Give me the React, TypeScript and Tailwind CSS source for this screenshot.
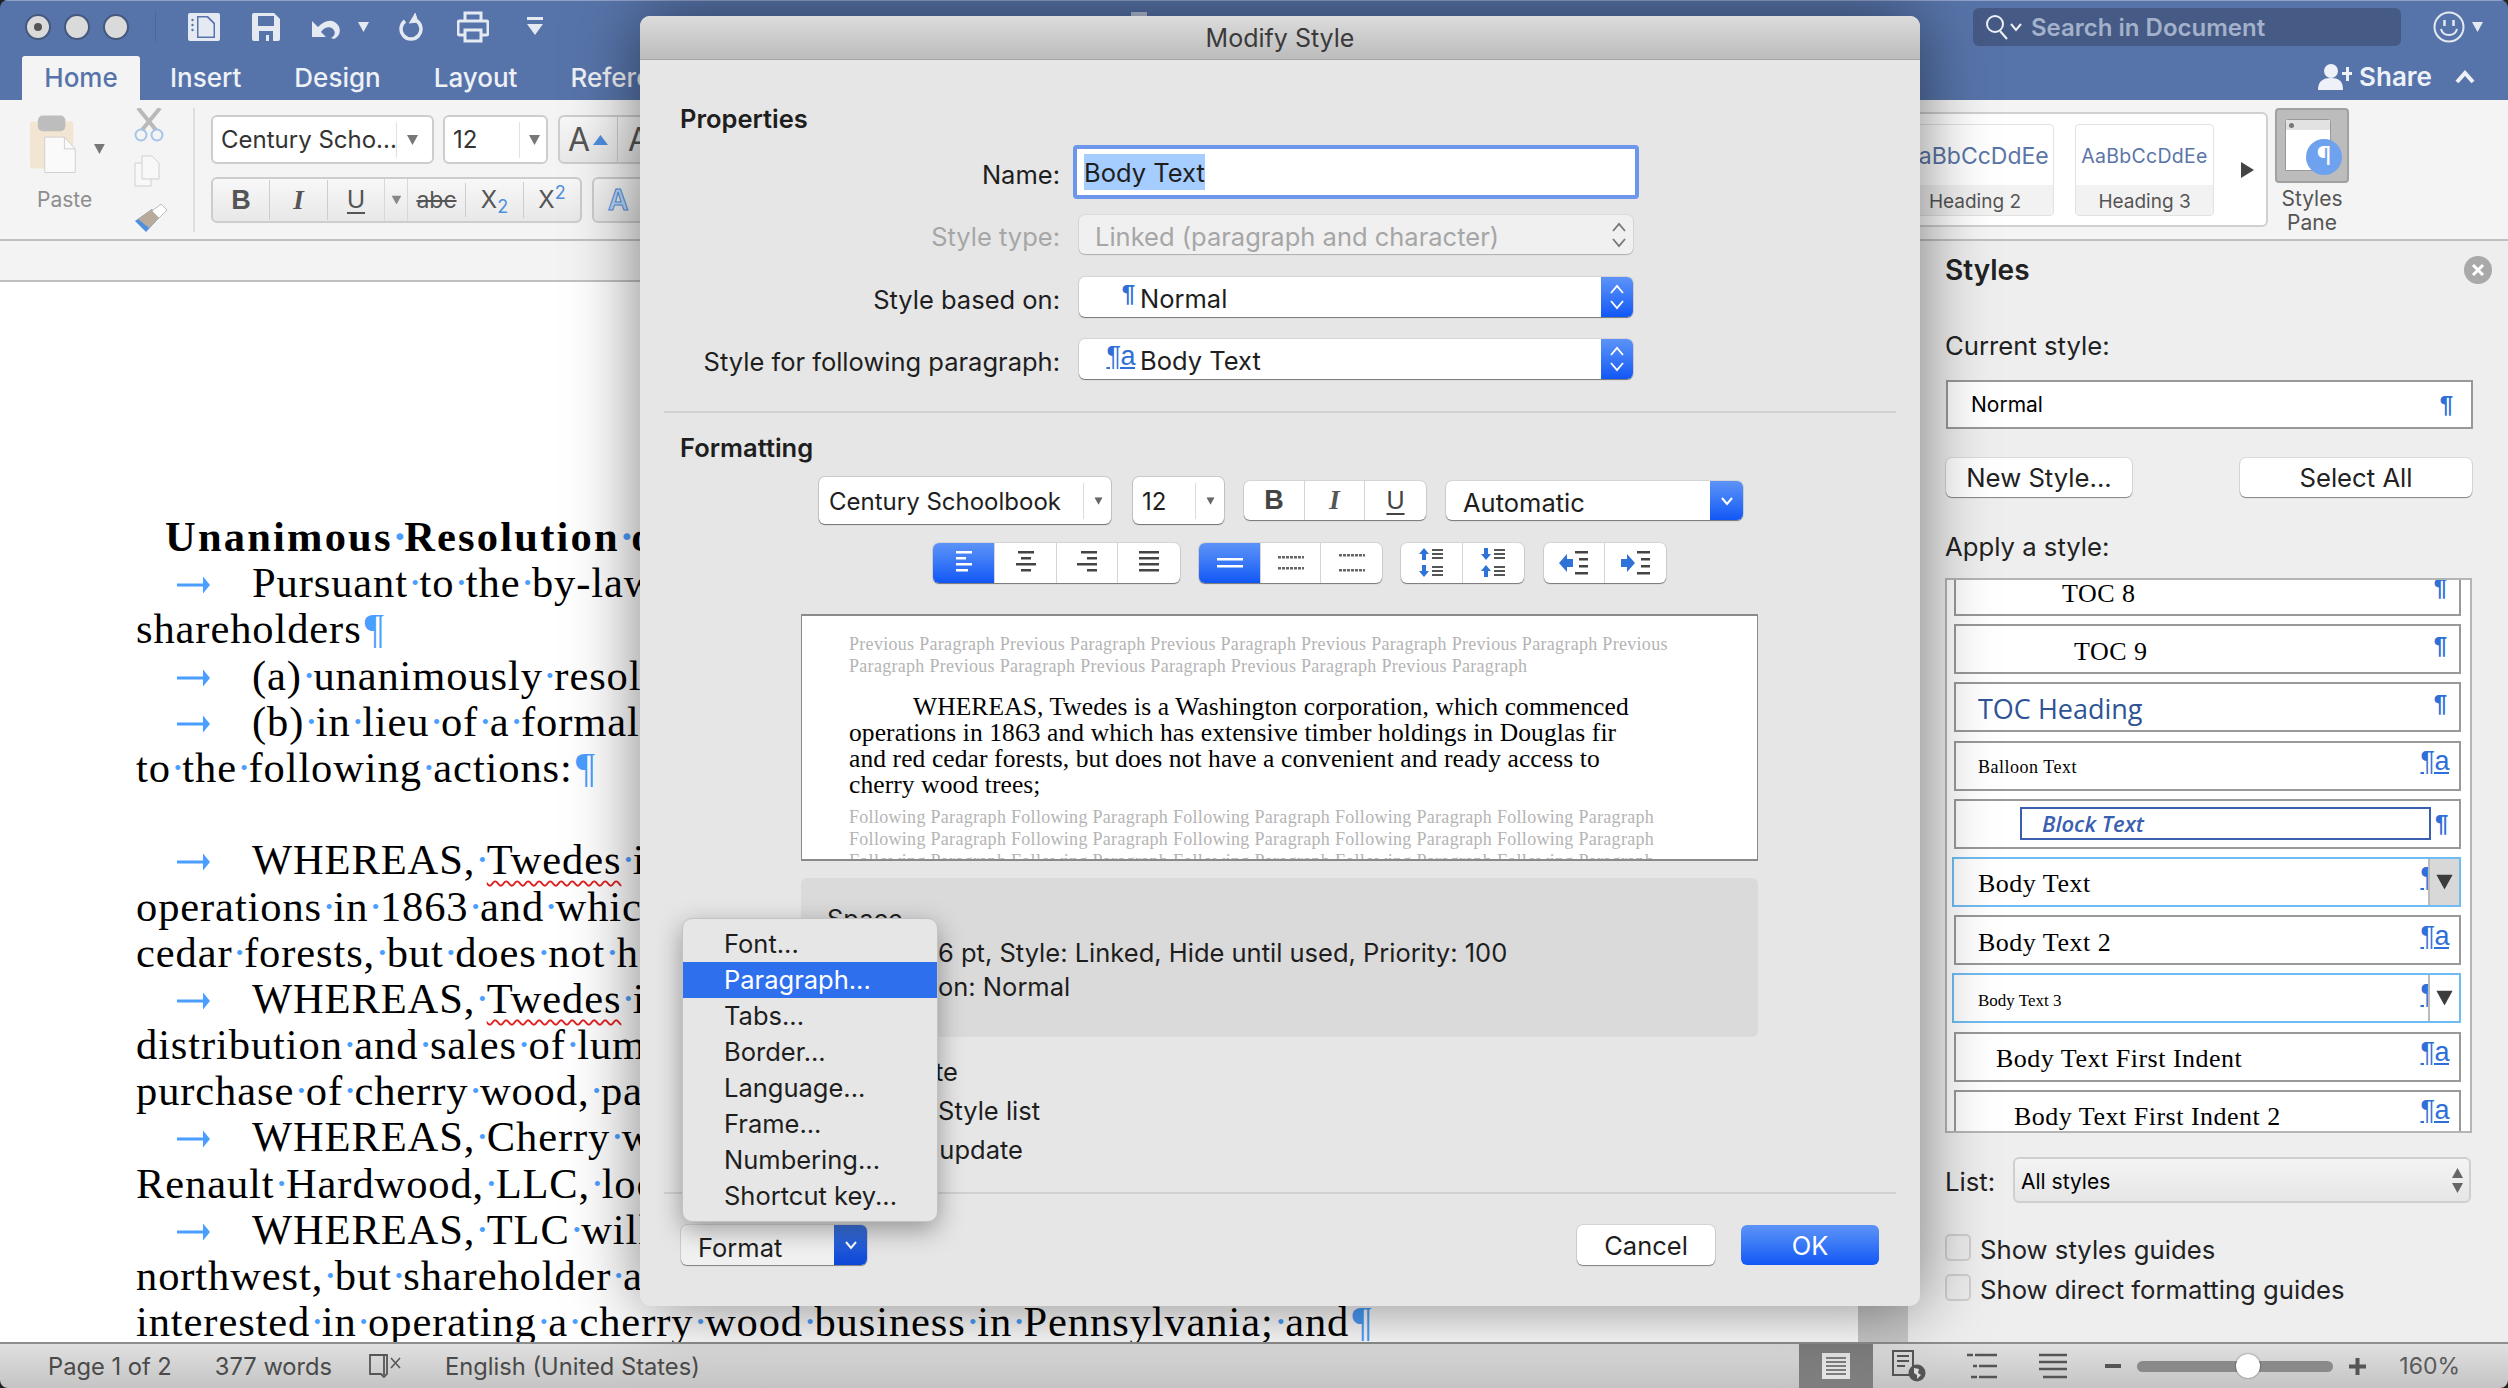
import React from 'react';

const ui = 'font-["Inter","Liberation_Sans",sans-serif]';

// --- Small pieces ---
function Caret({ className = '' }: { className?: string }) {
  return (
    <svg width="11" height="10" viewBox="0 0 11 10" className={className}>
      <path d="M0 0h11L5.5 10z" fill="currentColor" />
    </svg>
  );
}

function Updown({ color = 'white' }: { color?: string }) {
  return (
    <svg width="16" height="28" viewBox="0 0 16 28" fill="none" stroke={color} strokeWidth="1.8">
      <path d="M2 10l6-7 6 7M2 18l6 7 6-7" />
    </svg>
  );
}

function Chevron({ color = 'white' }: { color?: string }) {
  return (
    <svg width="14" height="10" viewBox="0 0 14 10" fill="none" stroke={color} strokeWidth="2">
      <path d="M2 2l5 6 5-6" />
    </svg>
  );
}

function Pilcrow({ className = '' }: { className?: string }) {
  return <span className={`font-["Liberation_Sans",sans-serif] font-bold text-[#2f6fd8] text-[24px] leading-none ${className}`}>¶</span>;
}

function Linked({ className = '' }: { className?: string }) {
  return <span className={`font-["Liberation_Sans",sans-serif] text-[#2f6fd8] text-[27px] leading-[27px] tracking-[-0.5px] underline underline-offset-2 decoration-2 ${className}`}>¶a</span>;
}

function Lines({ rows, color = '#444', dash }: { rows: [number, number, number][]; color?: string; dash?: boolean }) {
  return (
    <svg width="28" height="28" viewBox="0 0 28 28">
      {rows.map(([x, y, w], i) => (
        <path key={i} d={`M${x} ${y + 1.25}h${w}`} stroke={color} strokeWidth="2.5" strokeDasharray={dash ? '3 1' : undefined} />
      ))}
    </svg>
  );
}

function ArrowLines({ up, dy = 0 }: { up: boolean; dy?: number }) {
  return (
    <g transform={`translate(0 ${dy})`}>
      <path d={up ? 'M5 0l5 6H7v6H3V6H0z' : 'M3 0h4v6h3l-5 6-5-6h3z'} fill="#2f72d8" />
      <rect x="13" y="1" width="11" height="2" fill="#555" />
      <rect x="13" y="5" width="11" height="2" fill="#555" />
      <rect x="13" y="9" width="11" height="2" fill="#555" />
    </g>
  );
}

function IndentIcon({ dir }: { dir: 'left' | 'right' }) {
  return (
    <svg width="32" height="28" viewBox="0 0 32 28">
      <path d={dir === 'left' ? 'M1 14l8-9v5h6v8H9v5z' : 'M15 14l-8-9v5H1v8h6v5z'} fill="#2f72d8" />
      <rect x="17" y="2" width="13" height="2.5" fill="#444" />
      <rect x="21" y="9" width="9" height="2.5" fill="#444" />
      <rect x="21" y="16" width="9" height="2.5" fill="#444" />
      <rect x="17" y="23" width="13" height="2.5" fill="#444" />
    </svg>
  );
}

function Seg({ children, w, on, last }: { children?: React.ReactNode; w: number; on?: boolean; last?: boolean }) {
  return (
    <div
      style={{ width: w }}
      className={`h-full flex items-center justify-center shrink-0 ${last ? '' : 'border-r border-[#d5d5d5]'} ${on ? 'bg-linear-to-b from-[#5d93f7] to-[#0f56f5]' : ''}`}
    >
      {children}
    </div>
  );
}

function SegGroup({ children }: { children: React.ReactNode }) {
  return (
    <div className="h-full flex bg-white rounded-[6px] overflow-hidden shadow-[0_1px_1px_rgba(0,0,0,0.45),0_0_0_1px_rgba(0,0,0,0.07)]">
      {children}
    </div>
  );
}

function BlueSelect({ h, w, label, icon }: { h: number; w: number; label: string; icon: React.ReactNode }) {
  return (
    <div style={{ height: h, width: w }} className="flex bg-white rounded-[6px] overflow-hidden shadow-[0_1px_1px_rgba(0,0,0,0.45),0_0_0_1px_rgba(0,0,0,0.07)]">
      <div className="flex-1 flex items-center justify-end">
        <div className="flex justify-end mr-[5px]">{icon}</div>
        <span className="w-[461px] text-[25.5px] pt-[5px]">{label}</span>
      </div>
      <div className="w-[32px] flex items-center justify-center bg-linear-to-b from-[#5d93f7] to-[#0f56f5]">
        <Updown />
      </div>
    </div>
  );
}

// --- Document text with non printing marks ---
function Marked({ text }: { text: string }) {
  const words = text.split(' ');
  return (
    <>
      {words.map((w, i) => (
        <React.Fragment key={i}>
          {w === 'Twedes' ? <span className="underline decoration-wavy decoration-[#e02020] decoration-2 underline-offset-[6px]">{w}</span> : w}
          {i < words.length - 1 && <span className="inline-block w-[11.5px] text-center text-[#4a9eff]">·</span>}
        </React.Fragment>
      ))}
    </>
  );
}

function TabArrow() {
  return (
    <svg width="116" height="20" viewBox="0 0 116 20" className="inline-block align-[2px]">
      <path d="M41 8.5h26v-7l7 8.5-7 8.5v-7h-26z" fill="#4a9eff" />
    </svg>
  );
}

function DocLine({ text, tab, mark, bold }: { text?: string; tab?: boolean; mark?: boolean; bold?: boolean }) {
  return (
    <div className={`h-[46.2px] leading-[46px] whitespace-nowrap ${bold ? 'font-bold pl-[29px] tracking-[2.2px]' : ''}`}>
      {tab && <TabArrow />}
      {text && <Marked text={text} />}
      {mark && <span className="text-[#4a9eff] ml-[3px]">¶</span>}
    </div>
  );
}

// --- Styles pane list rows ---
interface StyleRow {
  name: string;
  indent: number;
  cls: string;
  linked?: boolean;
  picked?: 'grey' | 'plain';
}

const rows: StyleRow[] = [
  { name: 'TOC 8', indent: 106, cls: 'font-["Liberation_Serif",serif] text-[26px] tracking-[0.5px] text-black' },
  { name: 'TOC 9', indent: 118, cls: 'font-["Liberation_Serif",serif] text-[26px] tracking-[0.5px] text-black' },
  { name: 'TOC Heading', indent: 22, cls: 'font-["Open_Sans",sans-serif] text-[27px] text-[#2f5496]' },
  { name: 'Balloon Text', indent: 22, cls: 'font-["Liberation_Serif",serif] text-[18px] tracking-[0.5px] text-black', linked: true },
  { name: 'Block Text', indent: 0, cls: '' },
  { name: 'Body Text', indent: 24, cls: 'font-["Liberation_Serif",serif] text-[26px] tracking-[0.5px] text-black', linked: true, picked: 'grey' },
  { name: 'Body Text 2', indent: 22, cls: 'font-["Liberation_Serif",serif] text-[26px] tracking-[0.5px] text-black', linked: true },
  { name: 'Body Text 3', indent: 24, cls: 'font-["Liberation_Serif",serif] text-[17px] text-black', linked: true, picked: 'plain' },
  { name: 'Body Text First Indent', indent: 40, cls: 'font-["Liberation_Serif",serif] text-[26px] tracking-[0.5px] text-black', linked: true },
  { name: 'Body Text First Indent 2', indent: 58, cls: 'font-["Liberation_Serif",serif] text-[26px] tracking-[0.5px] text-black', linked: true },
];

function StyleItem({ row }: { row: StyleRow }) {
  if (row.name === 'Block Text') {
    return (
      <div className="h-[50px] shrink-0 border-2 border-[#999] bg-white flex items-center pl-[64px] pr-[7px]">
        <div className="w-[411px] h-[33px] border-2 border-[#3a5fb0] flex items-center pl-[20px] font-['Open_Sans',sans-serif] italic font-semibold text-[22px] text-[#3a5fb0]">
          Block Text
        </div>
        <Pilcrow className="ml-[4px]" />
      </div>
    );
  }
  return (
    <div className={`relative h-[50px] shrink-0 border-2 bg-white flex items-center justify-between pr-[10px] ${row.picked ? 'border-[#6fbcf0] -ml-[2px]' : 'border-[#999]'}`} style={{ paddingLeft: row.indent }}>
      <span className={`pt-[4px] ${row.cls}`}>{row.name}</span>
      {row.linked ? <Linked className="-mt-[8px]" /> : <Pilcrow className="-mt-[6px] mr-[2px]" />}
      {row.picked && (
        <div className={`absolute right-0 top-0 bottom-0 w-[31px] border-l-2 border-[#bbb] flex items-center justify-center ${row.picked === 'grey' ? 'bg-[#d8d8d8]' : 'bg-white'}`}>
          <Caret className="text-[#3c3c3c] scale-150" />
        </div>
      )}
    </div>
  );
}

// --- Window parts ---
function TitleBar() {
  return (
    <div className="h-[100px] bg-[#5774aa] text-white border-t border-[#8ea1c6]">
      <div className="h-[51px] flex items-center">
        <div className="ml-[25px] flex gap-[13px]">
          <div className="w-[26px] h-[26px] rounded-full bg-[#dadada] border-2 border-[#44577d] flex items-center justify-center">
            <div className="w-[8px] h-[8px] rounded-full bg-[#555]" />
          </div>
          <div className="w-[26px] h-[26px] rounded-full bg-[#dadada] border-2 border-[#44577d]" />
          <div className="w-[26px] h-[26px] rounded-full bg-[#dadada] border-2 border-[#44577d]" />
        </div>
        <div className="ml-[26px] w-px h-[30px] bg-[#4e6896]" />
        <svg width="32" height="28" viewBox="0 0 32 28" className="ml-[32px]" fill="#e4e9f2">
          <path d="M2 0h28a2 2 0 0 1 2 2v24a2 2 0 0 1-2 2H2a2 2 0 0 1-2-2V2a2 2 0 0 1 2-2z" />
          <path d="M9 3h11l7 7v15H9z" fill="#5774aa" />
          <path d="M10.5 4.5H19l6.500 6.500v12.500H10.500z" fill="#e4e9f2" />
          <circle cx="4.500" cy="7" r="1.200" fill="#5774aa" />
          <circle cx="4.500" cy="12" r="1.200" fill="#5774aa" />
          <circle cx="4.500" cy="17" r="1.200" fill="#5774aa" />
        </svg>
        <svg width="28" height="28" viewBox="0 0 28 28" className="ml-[32px]" fill="#e4e9f2">
          <path d="M2 0h20l6 6v20a2 2 0 0 1-2 2H2a2 2 0 0 1-2-2V2a2 2 0 0 1 2-2z" />
          <rect x="6" y="3" width="16" height="10" fill="#5774aa" />
          <path d="M7 18h14v10h-4v-6h-3v6H7z" fill="#5774aa" />
        </svg>
        <svg width="30" height="24" viewBox="0 0 30 24" className="ml-[32px]" fill="none">
          <path d="M0 6v16h14L9 17c3-5 9-6 12-3 3 3 2 7-2 9l3 1c5-2 8-8 4-14C21 3 12 5 6 12z" fill="#e4e9f2" />
        </svg>
        <Caret className="ml-[16px] text-[#e4e9f2]" />
        <svg width="24" height="30" viewBox="0 0 24 30" className="ml-[30px]" fill="none" stroke="#e4e9f2" strokeWidth="3.500">
          <path d="M6 9a10 10 0 1 0 12 0" />
          <path d="M16 1l3 9-9 1" fill="#e4e9f2" strokeWidth="1" />
        </svg>
        <svg width="32" height="32" viewBox="0 0 32 32" className="ml-[34px]" fill="none" stroke="#e4e9f2" strokeWidth="3">
          <path d="M8 10V2h16v8" />
          <path d="M7 24H3a2 2 0 0 1-2-2V12a2 2 0 0 1 2-2h26a2 2 0 0 1 2 2v10a2 2 0 0 1-2 2h-4" />
          <path d="M8 19h16v11H8z" />
        </svg>
        <svg width="16" height="20" viewBox="0 0 16 20" className="ml-[38px]" fill="#e4e9f2">
          <rect y="0" width="16" height="3" />
          <path d="M0 7h16l-8 11z" />
        </svg>
        <div className="ml-auto w-[428px] h-[38px] rounded-[6px] bg-[#455a85] flex items-center pl-[12px]">
          <svg width="24" height="26" viewBox="0 0 24 26" fill="none" stroke="#eef1f7" strokeWidth="2">
            <circle cx="10" cy="10" r="8" />
            <path d="M15 17l7 8" />
          </svg>
          <Chevron color="#eef1f7" />
          <span className="ml-[8px] pt-[2px] text-[24px] font-semibold text-[#a3b1ca]">Search in Document</span>
        </div>
        <svg width="32" height="32" viewBox="0 0 32 32" className="ml-[32px]" fill="none" stroke="#e4e9f2" strokeWidth="2">
          <circle cx="16" cy="16" r="14.500" />
          <path d="M8 18c2 8 14 8 16 0" />
          <path d="M11.500 9v6M20.500 9v6" strokeWidth="2.500" />
        </svg>
        <Caret className="ml-[7px] mr-[25px] text-[#e4e9f2]" />
      </div>
      <div className="h-[48px] flex items-end text-[26px] font-medium">
        <div className="ml-[22px] w-[118px] h-[44px] rounded-t-[3px] bg-[#f4f4f4] text-[#5774aa] flex items-center justify-center pb-[2px]">Home</div>
        <div className="h-[44px] ml-[30px] flex items-center gap-[53px] pb-[2px] text-[#eef1f7]">
          <span>Insert</span>
          <span>Design</span>
          <span>Layout</span>
          <span>References</span>
        </div>
        <div className="ml-auto h-[44px] flex items-center pb-[3px] text-[#eef1f7]">
          <svg width="34" height="26" viewBox="0 0 34 26" fill="#eef1f7">
            <circle cx="13" cy="7" r="7" />
            <path d="M0 26c0-9 5-12 13-12s12 3 12 12z" />
            <path d="M24 8h4V3h3v5h3v3h-3v6h-3v-6h-4z" />
          </svg>
          <span className="ml-[7px] font-semibold">Share</span>
          <svg width="20" height="14" viewBox="0 0 20 14" className="ml-[23px] mr-[33px]" fill="none" stroke="#eef1f7" strokeWidth="4">
            <path d="M2 12l8-9 8 9" />
          </svg>
        </div>
      </div>
    </div>
  );
}

function Ribbon() {
  return (
    <div className="h-[141px] bg-[#f4f4f4] border-b-2 border-[#c0c0c0] flex">
      <div className="w-[640px] shrink-0 overflow-hidden flex">
        {/* Paste */}
        <div className="ml-[30px] w-[75px] shrink-0 pt-[15px]">
          <div className="flex items-center">
            <svg width="47" height="58" viewBox="0 0 47 58">
              <rect x="0" y="6" width="44" height="48" rx="3" fill="#f2e5d2" />
              <rect x="8" y="0" width="28" height="16" rx="5" fill="#bdbdbd" />
              <path d="M15 22h20l11 12v24H15z" fill="#fafafa" stroke="#cfcfcf" />
              <path d="M35 22v12h11" fill="none" stroke="#cfcfcf" />
            </svg>
            <Caret className="ml-[18px] mt-[10px] text-[#777]" />
          </div>
          <div className="mt-[11px] ml-[7px] text-[21px] text-[#8d8d8d]">Paste</div>
        </div>
        <div className="ml-[29px] w-[34px] shrink-0 pt-[8px]">
          <svg width="30" height="34" viewBox="0 0 30 34" fill="none">
            <path d="M4 0l18 22M26 0L8 22" stroke="#b9b9b9" strokeWidth="4" />
            <circle cx="7" cy="27" r="5.500" stroke="#a6c3e8" strokeWidth="2" />
            <circle cx="23" cy="27" r="5.500" stroke="#a6c3e8" strokeWidth="2" />
          </svg>
          <svg width="26" height="32" viewBox="0 0 26 32" className="mt-[13px]" fill="#f8f8f8" stroke="#cfcfcf">
            <path d="M1 8h16v23H1z" />
            <path d="M8 1h10l7 7v16H8z" />
          </svg>
          <svg width="34" height="30" viewBox="0 0 34 30" className="mt-[16px]">
            <path d="M1 18L18 6l7 9-13 14z" fill="#4f8fe0" />
            <path d="M4 16L18 6l7 9-10 10z" fill="#b9ab9a" />
            <path d="M18 8l9-7 6 6-8 8z" fill="#fff" stroke="#bbb" />
          </svg>
        </div>
        <div className="ml-[25px] w-[2px] h-[124px] mt-[8px] bg-[#dedede] shrink-0" />
        <div className="ml-[16px] pt-[15px] shrink-0">
          <div className="flex h-[49px]">
            <div className="w-[223px] rounded-[6px] bg-white border-2 border-[#cdcdcd] flex items-center">
              <span className="ml-[8px] w-[175px] whitespace-nowrap text-[24px] text-[#333]">Century Scho...</span>
              <div className="w-px h-[36px] bg-[#e2e2e2]" />
              <Caret className="ml-[10px] text-[#777]" />
            </div>
            <div className="ml-[9px] w-[105px] rounded-[6px] bg-white border-2 border-[#cdcdcd] flex items-center">
              <span className="ml-[8px] w-[66px] text-[24px] text-[#333]">12</span>
              <div className="w-px h-[36px] bg-[#e2e2e2]" />
              <Caret className="ml-[9px] text-[#777]" />
            </div>
            <div className="ml-[10px] w-[140px] rounded-[6px] bg-linear-to-b from-[#f8f8f8] to-[#e8e8e8] border-2 border-[#cdcdcd] flex items-center">
              <span className="ml-[8px] text-[32px] text-[#555]">A</span>
              <svg width="15" height="10" viewBox="0 0 15 10" className="ml-[3px]"><path d="M0 10L7.500 0 15 10z" fill="#4f8fe0" /></svg>
              <div className="ml-[9px] w-px h-full bg-[#cdcdcd]" />
              <span className="ml-[10px] text-[32px] text-[#555]">A</span>
            </div>
          </div>
          <div className="mt-[13px] flex h-[46px]">
            <div className="w-[371px] rounded-[6px] bg-linear-to-b from-[#f8f8f8] to-[#e8e8e8] border-2 border-[#cdcdcd] flex items-center text-[#555]">
              <div className="w-[57px] text-center font-bold text-[27px] font-['Liberation_Sans',sans-serif] border-r border-[#cdcdcd]">B</div>
              <div className="w-[58px] text-center italic font-bold text-[27px] font-['Liberation_Serif',serif] border-r border-[#cdcdcd]">I</div>
              <div className="w-[56px] text-center text-[25px] font-['Liberation_Sans',sans-serif] underline decoration-2 underline-offset-4">U</div>
              <div className="w-[24px] flex justify-center border-l border-[#d8d8d8] border-r h-full items-center">
                <Caret className="text-[#888] scale-90" />
              </div>
              <div className="w-[58px] text-center text-[23px] line-through border-r border-[#cdcdcd]">abc</div>
              <div className="w-[58px] text-center text-[24px] border-r border-[#cdcdcd]">X<sub className="text-[18px] text-[#4f8fe0]">2</sub></div>
              <div className="w-[56px] text-center text-[24px]">X<sup className="text-[18px] text-[#4f8fe0]">2</sup></div>
            </div>
            <div className="ml-[10px] w-[80px] rounded-[6px] bg-linear-to-b from-[#f8f8f8] to-[#e8e8e8] border-2 border-[#cdcdcd] text-[28px] font-semibold text-[#bcd8f8] pl-[14px] [-webkit-text-stroke:1px_#4f8fe0]">A</div>
          </div>
        </div>
      </div>
      <div className="ml-auto flex shrink-0">
        <div className="mt-[12px] w-[400px] h-[115px] bg-white border-2 border-[#d0d0d0] rounded-[6px] flex items-center justify-end pr-[12px]">
          <div className="w-[158px] h-[92px] rounded-[4px] border border-[#e2e2e2] flex flex-col overflow-hidden">
            <div className="flex-1 flex items-center pl-[6px] pt-[4px] overflow-hidden text-[23px] text-[#5a75a8] whitespace-nowrap">AaBbCcDdEe</div>
            <div className="h-[30px] bg-[#f2f2f2] text-center pt-[3px] text-[19px] text-[#555]">Heading 2</div>
          </div>
          <div className="ml-[21px] w-[139px] h-[92px] rounded-[4px] border border-[#e2e2e2] flex flex-col overflow-hidden">
            <div className="flex-1 flex items-center justify-center pt-[4px] overflow-hidden text-[19.5px] tracking-[0.3px] text-[#5a75a8] whitespace-nowrap">AaBbCcDdEe</div>
            <div className="h-[30px] bg-[#f2f2f2] text-center pt-[3px] text-[19px] text-[#555]">Heading 3</div>
          </div>
          <svg width="13" height="16" viewBox="0 0 13 16" className="ml-[27px]"><path d="M0 0l13 8-13 8z" fill="#444" /></svg>
        </div>
        <div className="ml-[7px] mr-[159px] w-[74px] pt-[8px]">
          <div className="relative h-[75px] bg-[#bcbcbc] border-2 border-[#a0a0a0] rounded-[4px]">
            <div className="ml-[8px] mt-[9px] w-[46px] h-[52px] bg-white border border-[#999] rounded-t-[3px]">
              <div className="h-[10px] bg-[#e2e2e2] flex items-center pl-[3px]"><div className="w-[5px] h-[5px] rounded-full bg-[#777]" /></div>
            </div>
            <div className="absolute left-[29px] top-[29px] w-[36px] h-[36px] rounded-full bg-[#6ea2ee] flex items-center justify-center text-white text-[25px]">¶</div>
          </div>
          <div className="mt-[4px] text-center text-[21px] leading-[24px] text-[#555]">Styles<br />Pane</div>
        </div>
      </div>
    </div>
  );
}

function StylesPane() {
  return (
    <div className="w-[600px] shrink-0 bg-[#eeeeee] pl-[37px] text-[#222] text-[25.7px] flex flex-col">
      <div className="mt-[10px] h-[38px] flex items-center justify-between pr-[16px]">
        <span className="font-semibold text-[28px]">Styles</span>
        <div className="w-[28px] h-[28px] rounded-full bg-[#a9a9a9] flex items-center justify-center">
          <svg width="14" height="14" viewBox="0 0 14 14" stroke="white" strokeWidth="3"><path d="M2 2l10 10M12 2L2 12" /></svg>
        </div>
      </div>
      <div className="mt-[37px] h-[38px] flex items-center pt-[3px]">Current style:</div>
      <div className="mt-[16px] ml-px w-[527px] h-[49px] border-2 border-[#999] bg-white flex items-center justify-between pl-[23px] pr-[18px]">
        <span className="text-[21px] text-black">Normal</span>
        <Pilcrow />
      </div>
      <div className="mt-[29px] flex h-[39px]">
        <div className="ml-px w-[186px] pt-[2px] rounded-[6px] bg-white shadow-[0_1px_1px_rgba(0,0,0,0.4),0_0_0_1px_rgba(0,0,0,0.08)] flex items-center justify-center">New Style...</div>
        <div className="ml-[108px] w-[232px] pt-[2px] rounded-[6px] bg-white shadow-[0_1px_1px_rgba(0,0,0,0.4),0_0_0_1px_rgba(0,0,0,0.08)] flex items-center justify-center">Select All</div>
      </div>
      <div className="mt-[30px] h-[38px] flex items-center pt-[3px]">Apply a style:</div>
      <div className="mt-[13px] w-[527px] h-[555px] border-2 border-[#b5b5b5] bg-white overflow-hidden pl-[7px] pr-[9px]">
        <div className="-mt-[14px] flex flex-col gap-[8.2px]">
          {rows.map(r => <StyleItem key={r.name} row={r} />)}
        </div>
      </div>
      <div className="mt-[24px] h-[46px] flex items-center">
        <span className="w-[68px] pt-[5px]">List:</span>
        <div className="w-[458px] h-full rounded-[6px] bg-linear-to-b from-[#f4f4f4] to-[#e6e6e6] border-2 border-[#cfcfcf] flex items-center justify-between pl-[6px] pr-[6px]">
          <span className="text-[21px] pt-[4px] text-black">All styles</span>
          <div className="flex flex-col gap-[5px] text-[#666]">
            <Caret className="rotate-180" />
            <Caret />
          </div>
        </div>
      </div>
      <div className="mt-[31px] h-[27px] flex items-center">
        <div className="w-[26px] h-[27px] rounded-[5px] bg-[#ececec] border-2 border-[#cfcfcf]" />
        <span className="ml-[9px] pt-[6px]">Show styles guides</span>
      </div>
      <div className="mt-[13px] h-[27px] flex items-center">
        <div className="w-[26px] h-[27px] rounded-[5px] bg-[#ececec] border-2 border-[#cfcfcf]" />
        <span className="ml-[9px] pt-[6px]">Show direct formatting guides</span>
      </div>
    </div>
  );
}

function Document() {
  return (
    <div className="w-[1908px] shrink-0 flex flex-col">
      <div className="h-[41px] bg-[#f3f3f3] border-b-2 border-[#c0c0c0]" />
      <div className="flex-1 flex overflow-hidden">
        <div className="w-[1858px] bg-white pt-[232px] pl-[136px] font-['Liberation_Serif',serif] text-[42.5px] text-black tracking-[0.9px]">
          <DocLine bold text="Unanimous Resolution of the Shareholders" />
          <DocLine tab text="Pursuant to the by-laws of the Company, the undersigned" />
          <DocLine text="shareholders" mark />
          <DocLine tab text="(a) unanimously resolved to take action by written consent" />
          <DocLine tab text="(b) in lieu of a formal meeting of the shareholders, agree" />
          <DocLine text="to the following actions:" mark />
          <DocLine />
          <DocLine tab text="WHEREAS, Twedes is a Washington corporation, which commenced" />
          <DocLine text="operations in 1863 and which has extensive timber holdings" />
          <DocLine text="cedar forests, but does not have a convenient and ready access" />
          <DocLine tab text="WHEREAS, Twedes is also engaged in the manufacture," />
          <DocLine text="distribution and sales of lumber products and desires" />
          <DocLine text="purchase of cherry wood, particularly from the northeast" />
          <DocLine tab text="WHEREAS, Cherry wood is available from the owners of" />
          <DocLine text="Renault Hardwood, LLC, located in Pennsylvania" />
          <DocLine tab text="WHEREAS, TLC will be the operating company for the" />
          <DocLine text="northwest, but shareholder and its affiliates are not" />
          <DocLine text="interested in operating a cherry wood business in Pennsylvania; and" mark />
        </div>
        <div className="w-[50px] bg-[#c9c9c9]" />
      </div>
    </div>
  );
}

function StatusBar() {
  return (
    <div className="h-[46px] border-t-2 border-[#8e8e8e] bg-linear-to-b from-[#e0e0e0] to-[#c4c4c4] rounded-b-[8px] flex items-center text-[23.7px] text-[#4a4a4a] overflow-hidden">
      <span className="ml-[48px] pt-[2px]">Page 1 of 2</span>
      <span className="ml-[43px] pt-[2px]">377 words</span>
      <svg width="32" height="28" viewBox="0 0 32 28" className="ml-[37px]" fill="none" stroke="#555" strokeWidth="1.800">
        <path d="M12 3H1v19h11l3 3 3-3V3h-6zM15 3v20" />
        <path d="M22 6l9 10M31 6l-9 10" strokeWidth="1.500" />
      </svg>
      <span className="ml-[44px] pt-[2px]">English (United States)</span>
      <div className="ml-auto flex items-center h-full">
        <div className="w-[74px] h-full bg-[#7f7f7f] flex items-center justify-center">
          <svg width="28" height="26" viewBox="0 0 28 26" fill="#e6e6e6">
            <path d="M0 0h28v26H0z" />
            {[4, 8, 12, 16, 20].map(y => <rect key={y} x="4" y={y} width="20" height="2" fill="#7f7f7f" />)}
          </svg>
        </div>
        <svg width="34" height="32" viewBox="0 0 34 32" className="ml-[19px]" fill="none" stroke="#555" strokeWidth="2">
          <path d="M1 1h20v24H1zM5 6h12M5 11h12M5 16h8" />
          <circle cx="25" cy="23" r="8.500" fill="#555" stroke="none" />
          <path d="M22 18l5 1-1 4 3 2-4 4v-4l-3-2z" fill="#ddd" stroke="none" />
        </svg>
        <svg width="30" height="26" viewBox="0 0 30 26" className="ml-[41px]" stroke="#555" strokeWidth="2.500">
          <path d="M0 2h6M8 2h22M6 13h4M12 13h18M4 24h6M12 24h18" />
        </svg>
        <svg width="28" height="26" viewBox="0 0 28 26" className="ml-[42px]" stroke="#555" strokeWidth="2.500">
          <path d="M0 2h28M0 9h28M0 16h28M4 24h24" />
        </svg>
        <div className="ml-[38px] w-[16px] h-[4px] bg-[#555]" />
        <div className="ml-[16px] w-[196px] h-[11px] rounded-full bg-[#8a8a8a] flex items-center">
          <div className="ml-[99px] w-[24px] h-[24px] rounded-full bg-white shadow-[0_0_2px_rgba(0,0,0,0.6)]" />
        </div>
        <svg width="17" height="17" viewBox="0 0 17 17" className="ml-[16px]" fill="#555"><path d="M6.500 0h4v6.500H17v4h-6.500V17h-4v-6.500H0v-4h6.500z" /></svg>
        <span className="ml-[33px] mr-[48px] text-[23px] text-[#5a5a5a]">160%</span>
      </div>
    </div>
  );
}

// --- Modify Style dialog ---
function FormRow({ label, dim, className, children }: { label: string; dim?: boolean; className: string; children: React.ReactNode }) {
  return (
    <div className={`flex items-center ${className}`}>
      <span className={`w-[420px] pt-[6px] text-right ${dim ? 'text-[#a6a6a6]' : ''}`}>{label}</span>
      {children}
    </div>
  );
}

const menuItems = ['Font...', 'Paragraph...', 'Tabs...', 'Border...', 'Language...', 'Frame...', 'Numbering...', 'Shortcut key...'];

function Dialog() {
  return (
    <div className="absolute left-[640px] top-[16px] w-[1280px] h-[1290px] rounded-[10px] bg-[#e6e6e6] shadow-[0_0_70px_rgba(0,0,0,0.5)] text-[25.5px] text-[#1e1e1e]">
      <div className="h-[44px] pt-[3px] rounded-t-[10px] bg-linear-to-b from-[#dcdcdc] to-[#bcbcbc] border-b border-[#a5a5a5] flex items-center justify-center text-[25px] text-[#3a3a3a]">Modify Style</div>

      <div className="mt-[40px] ml-[40px] h-[36px] pt-[2px] flex items-center font-semibold">Properties</div>
      <FormRow label="Name:" className="mt-[9px] h-[54px]">
        <div className="ml-[13px] w-[566px] h-[54px] rounded-[4px] border-[4px] border-[#6c97ea] bg-white flex items-center pl-[7px]">
          <span className="bg-[#a5cdff] leading-[34px] pt-[2px]">Body Text</span>
        </div>
      </FormRow>
      <FormRow label="Style type:" dim className="mt-[16px] h-[39px]">
        <div className="ml-[19px] w-[554px] h-[39px] rounded-[6px] bg-[#f0f0f0] shadow-[0_1px_1px_rgba(0,0,0,0.2),0_0_0_1px_rgba(0,0,0,0.05)] flex items-center justify-between pl-[16px] pr-[6px] text-[#a6a6a6]">
          <span className="pt-[5px]">Linked (paragraph and character)</span>
          <Updown color="#777" />
        </div>
      </FormRow>
      <FormRow label="Style based on:" className="mt-[23px] h-[40px]">
        <div className="ml-[19px]">
          <BlueSelect h={40} w={554} label="Normal" icon={<Pilcrow className="-mt-[6px]" />} />
        </div>
      </FormRow>
      <FormRow label="Style for following paragraph:" className="mt-[22px] h-[40px]">
        <div className="ml-[19px]">
          <BlueSelect h={40} w={554} label="Body Text" icon={<Linked className="-mt-[6px]" />} />
        </div>
      </FormRow>

      <div className="mt-[32px] mx-[24px] h-[2px] bg-[#d0d0d0]" />
      <div className="mt-[16px] ml-[40px] h-[36px] pt-[2px] flex items-center font-semibold">Formatting</div>

      <div className="mt-[12px] ml-[179px] h-[47px] flex items-center">
        <div className="w-[292px] h-[47px] rounded-[6px] bg-white shadow-[0_1px_1px_rgba(0,0,0,0.45),0_0_0_1px_rgba(0,0,0,0.12)] flex items-center">
          <span className="ml-[10px] w-[254px] text-[24px] pt-[2px]">Century Schoolbook</span>
          <div className="w-px h-[36px] bg-[#dcdcdc]" />
          <Caret className="ml-[9px] scale-75 text-[#666]" />
        </div>
        <div className="ml-[22px] w-[91px] h-[47px] rounded-[6px] bg-white shadow-[0_1px_1px_rgba(0,0,0,0.45),0_0_0_1px_rgba(0,0,0,0.12)] flex items-center">
          <span className="ml-[9px] w-[53px] text-[24px] pt-[2px]">12</span>
          <div className="w-px h-[36px] bg-[#dcdcdc]" />
          <Caret className="ml-[9px] scale-75 text-[#666]" />
        </div>
        <div className="ml-[20px] h-[39px]">
          <SegGroup>
            <Seg w={61}><span className="font-bold text-[27px] text-[#444] font-['Liberation_Sans',sans-serif]">B</span></Seg>
            <Seg w={60}><span className="italic font-bold text-[27px] text-[#555] font-['Liberation_Serif',serif]">I</span></Seg>
            <Seg w={61} last><span className="text-[25px] text-[#444] underline underline-offset-4 decoration-2 font-['Liberation_Sans',sans-serif]">U</span></Seg>
          </SegGroup>
        </div>
        <div className="ml-[20px] w-[297px] h-[39px] rounded-[6px] bg-white overflow-hidden shadow-[0_1px_1px_rgba(0,0,0,0.45),0_0_0_1px_rgba(0,0,0,0.07)] flex">
          <span className="flex-1 pl-[17px] pt-[2px] leading-[39px]">Automatic</span>
          <div className="w-[33px] bg-linear-to-b from-[#5d93f7] to-[#0f56f5] flex items-center justify-center"><Chevron /></div>
        </div>
      </div>

      <div className="mt-[19px] ml-[293px] h-[40px] flex">
        <SegGroup>
          <Seg w={62} on><Lines color="white" rows={[[6, 2, 16], [6, 8, 10], [6, 14, 16], [6, 20, 12]]} /></Seg>
          <Seg w={62}><Lines rows={[[6, 2, 16], [9, 8, 10], [4, 14, 20], [9, 20, 10]]} /></Seg>
          <Seg w={61}><Lines rows={[[8, 2, 16], [14, 8, 10], [4, 14, 20], [14, 20, 10]]} /></Seg>
          <Seg w={62} last><Lines rows={[[4, 2, 20], [4, 8, 20], [4, 14, 20], [4, 20, 20]]} /></Seg>
        </SegGroup>
        <div className="ml-[19px] h-full">
          <SegGroup>
            <Seg w={62} on><Lines color="white" rows={[[1, 9, 26], [1, 16, 26]]} /></Seg>
            <Seg w={60}><Lines dash rows={[[1, 7, 26], [1, 18, 26]]} color="#666" /></Seg>
            <Seg w={61} last><Lines dash rows={[[1, 5, 26], [1, 20, 26]]} color="#666" /></Seg>
          </SegGroup>
        </div>
        <div className="ml-[19px] h-full">
          <SegGroup>
            <Seg w={62}>
              <svg width="26" height="30" viewBox="0 0 26 30"><ArrowLines up /><ArrowLines up={false} dy={17} /></svg>
            </Seg>
            <Seg w={61} last>
              <svg width="26" height="30" viewBox="0 0 26 30"><ArrowLines up={false} /><ArrowLines up dy={17} /></svg>
            </Seg>
          </SegGroup>
        </div>
        <div className="ml-[20px] h-full">
          <SegGroup>
            <Seg w={61}><IndentIcon dir="left" /></Seg>
            <Seg w={61} last><IndentIcon dir="right" /></Seg>
          </SegGroup>
        </div>
      </div>

      <div className="mt-[31px] ml-[161px] w-[957px] h-[247px] bg-white border-t-2 border-x border-b-2 border-[#8a8a8a] overflow-hidden pt-[17px] pl-[47px] whitespace-nowrap font-['Liberation_Serif',serif]">
        <div className="text-[18px] leading-[22px] tracking-[0.3px] text-[#b4b4b4]">
          <div>Previous Paragraph Previous Paragraph Previous Paragraph Previous Paragraph Previous Paragraph Previous</div>
          <div>Paragraph Previous Paragraph Previous Paragraph Previous Paragraph Previous Paragraph</div>
        </div>
        <div className="mt-[17px] text-[25.5px] leading-[26px] tracking-[0.1px] text-black">
          <div className="pl-[64px]">WHEREAS, Twedes is a Washington corporation, which commenced</div>
          <div>operations in 1863 and which has extensive timber holdings in Douglas fir</div>
          <div>and red cedar forests, but does not have a convenient and ready access to</div>
          <div>cherry wood trees;</div>
        </div>
        <div className="mt-[8px] text-[18px] leading-[22px] tracking-[0.3px] text-[#b4b4b4]">
          <div>Following Paragraph Following Paragraph Following Paragraph Following Paragraph Following Paragraph</div>
          <div>Following Paragraph Following Paragraph Following Paragraph Following Paragraph Following Paragraph</div>
          <div>Following Paragraph Following Paragraph Following Paragraph Following Paragraph Following Paragraph</div>
        </div>
      </div>

      <div className="mt-[17px] ml-[161px] w-[957px] h-[159px] rounded-[6px] bg-[#dadada] pt-[24px] pl-[26px] leading-[34px]">
        <div>Space</div>
        <div><span className="inline-block w-[111px]">After:</span>6 pt, Style: Linked, Hide until used, Priority: 100</div>
        <div><span className="inline-block w-[111px]">Based</span>on: Normal</div>
      </div>

      <div className="mt-[15px] leading-[39px]">
        <div className="ml-[127px]">Add to template</div>
        <div className="ml-[135px]">Add to Quick Style list</div>
        <div className="ml-[129px]">Automatically update</div>
      </div>

      <div className="mt-[23px] mx-[24px] h-[2px] bg-[#d0d0d0]" />

      <div className="mt-[31px] mx-[41px] h-[40px] flex items-center justify-between">
        <div className="w-[186px] h-[40px] rounded-[6px] bg-[#f0f0f0] overflow-hidden shadow-[0_1px_1px_rgba(0,0,0,0.4),0_0_0_1px_rgba(0,0,0,0.08)] flex">
          <span className="flex-1 pl-[17px] pt-[3px] leading-[40px]">Format</span>
          <div className="w-[33px] bg-linear-to-b from-[#3c72dc] to-[#0b45d8] flex items-center justify-center"><Chevron /></div>
        </div>
        <div className="flex gap-[26px]">
          <div className="w-[138px] h-[40px] pt-[3px] rounded-[6px] bg-white shadow-[0_1px_1px_rgba(0,0,0,0.4),0_0_0_1px_rgba(0,0,0,0.08)] flex items-center justify-center">Cancel</div>
          <div className="w-[138px] h-[40px] pt-[3px] rounded-[6px] bg-linear-to-b from-[#5d93f7] to-[#0f56f5] text-white flex items-center justify-center">OK</div>
        </div>
      </div>

      {/* Format menu, open over the dialog */}
      <div className="absolute left-[42px] top-[902px] w-[256px] h-[304px] rounded-[10px] bg-[#e6e6e6] border border-[#c2c2c2] shadow-[0_8px_26px_rgba(0,0,0,0.35)] pt-[7px] overflow-hidden">
        {menuItems.map((item, i) => (
          <div key={item} className={`h-[36px] leading-[36px] pl-[41px] ${i === 1 ? 'bg-[#2e6fee] text-white' : ''}`}>{item}</div>
        ))}
      </div>
    </div>
  );
}

export default function App() {
  return (
    <div className="w-[2508px] h-[1388px] bg-[#222] overflow-hidden">
      <div className={`relative w-[2508px] h-[1388px] rounded-t-[8px] overflow-hidden ${ui}`}>
        <TitleBar />
        <Ribbon />
        <div className="h-[1101px] flex">
          <Document />
          <StylesPane />
        </div>
        <StatusBar />
        <div className="absolute left-[1131px] top-[12px] w-[16px] h-[6px] bg-[#b8c4da]" />
        <Dialog />
      </div>
    </div>
  );
}
